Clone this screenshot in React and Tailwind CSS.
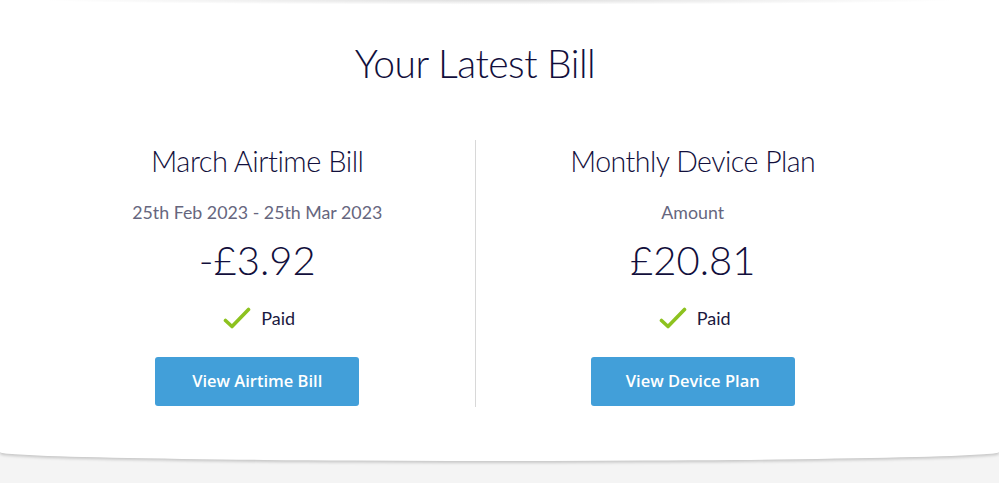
import React from 'react';

const Check = () => (
  <svg width="28" height="22" viewBox="0 0 28 22" fill="none">
    <path d="M2.5 13.5 L9 19.5 L25.5 2.5" stroke="#8dc21f" strokeWidth="3.6" strokeLinecap="round" strokeLinejoin="round" />
  </svg>
);

const BillColumn = ({ title, titleSize, subtitle, amount, button }) => (
  <div className="flex-1 flex flex-col items-center">
    <h2 className={`${titleSize} leading-[40px] font-light text-[#120f3c] tracking-[-0.5px] mt-[1px]`}>{title}</h2>
    <p className="mt-[19px] text-[17.8px] leading-[24px] text-[#66667e]">{subtitle}</p>
    <p className="mt-[10px] text-[40px] leading-[52px] font-light text-[#120f3c]">{amount}</p>
    <div className="mt-[20px] flex items-center gap-[10px] pl-[4px]">
      <Check />
      <span className="text-[18px] leading-[24px] text-[#1a1840]">Paid</span>
    </div>
    <button
      className="mt-[27px] w-[204px] h-[49px] rounded-[3px] bg-[#429fd9] text-white text-[16.5px] font-semibold"
      style={{ fontFamily: '"Open Sans", sans-serif' }}
    >
      {button}
    </button>
  </div>
);

const App = () => {
  return (
    <div className="relative h-[483px] w-full overflow-hidden bg-[#f4f4f4]" style={{ fontFamily: '"Lato", "Noto Sans", sans-serif' }}>
      {/* Card */}
      <div className="relative h-[461px] bg-white rounded-b-[50%_9px] shadow-[0_2px_3px_rgba(0,0,0,0.18)]">
        <div className="absolute top-0 left-0 right-0 h-[5px] bg-[radial-gradient(ellipse_at_top,rgba(0,0,0,0.13),rgba(0,0,0,0)_65%)]" />
        <div className="w-[870px] ml-[40px] pt-[38px]">
          <h1 className="text-center text-[39px] leading-[50px] font-light text-[#120f3c] tracking-[-0.5px]">Your Latest Bill</h1>
          <div className="mt-[52px] flex">
            <BillColumn
              title="March Airtime Bill"
              titleSize="text-[29px]"
              subtitle="25th Feb 2023 - 25th Mar 2023"
              amount="-£3.92"
              button="View Airtime Bill"
            />
            <div className="w-px h-[267px] bg-[#d8d8d8]" />
            <BillColumn
              title="Monthly Device Plan"
              titleSize="text-[28.5px]"
              subtitle="Amount"
              amount="£20.81"
              button="View Device Plan"
            />
          </div>
        </div>
      </div>
    </div>
  );
};

export default App;
